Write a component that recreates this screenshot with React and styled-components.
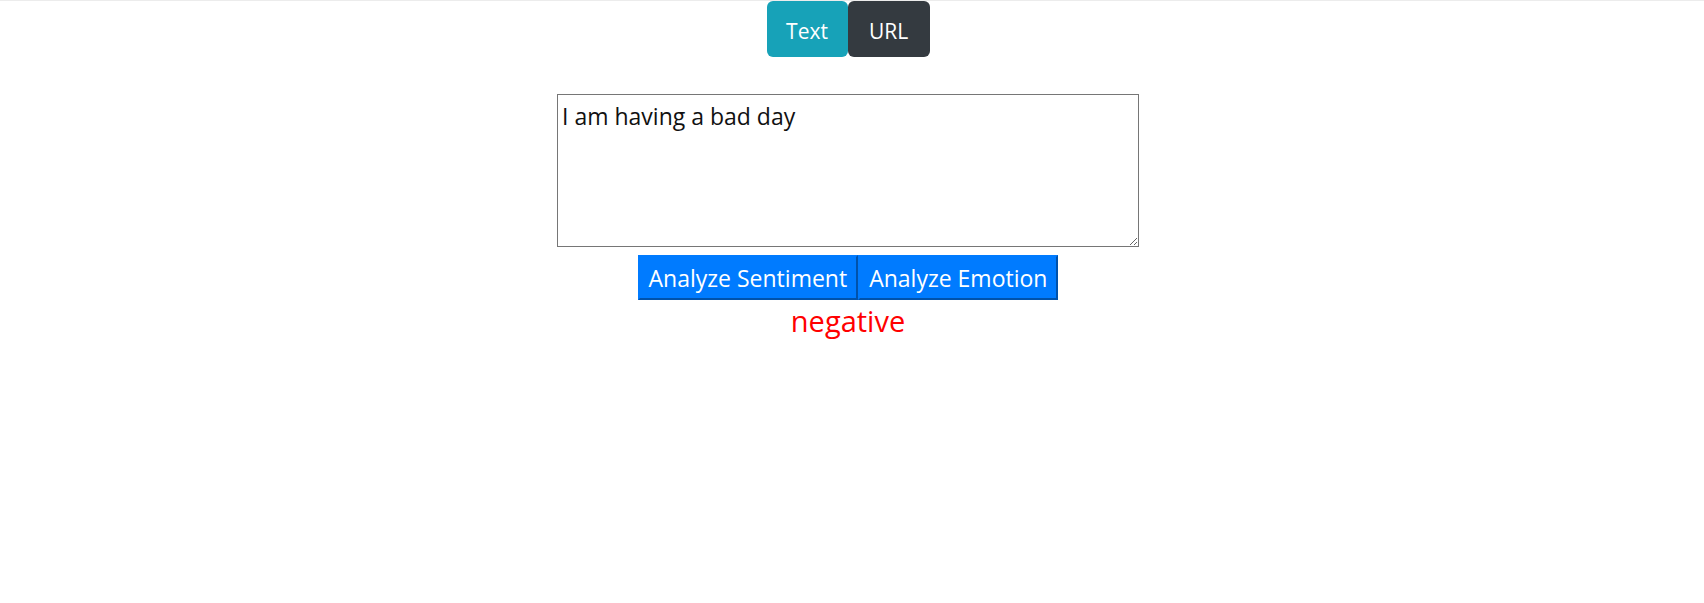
import React, { useState } from "react";
import styled, { createGlobalStyle } from "styled-components";

const Global = createGlobalStyle`
  html, body { margin: 0; padding: 0; background: #fff; }
  body { font-family: "Open Sans", "Noto Sans", sans-serif; color: #212529; }
`;

const Page = styled.div`
  border-top: 1px solid #ececec;
  padding-right: 8px;
  display: flex;
  flex-direction: column;
  align-items: center;
`;

const Tabs = styled.div`
  display: flex;
`;

const Tab = styled.button`
  font-family: inherit;
  font-size: 21px;
  color: #fff;
  background: ${(p) => p.$bg};
  border: none;
  border-radius: 6px;
  height: 56px;
  width: ${(p) => p.$w}px;
  padding: 4px 0 0;
  cursor: pointer;
`;

const TextArea = styled.textarea`
  margin-top: 37px;
  width: 582px;
  height: 153px;
  box-sizing: border-box;
  border: 1px solid #767676;
  font-family: inherit;
  font-size: 23px;
  line-height: 1.5;
  padding: 4px 4px;
  color: #111;
  resize: both;
`;

const ButtonRow = styled.div`
  display: flex;
  margin-top: 8px;
`;

const ActionButton = styled.button`
  font-family: inherit;
  font-size: 23px;
  color: #fff;
  background: #007bff;
  border: 2px outset #007bff;
  height: 45px;
  padding: 0 9px;
  cursor: pointer;
`;

const Result = styled.div`
  color: #ff0000;
  font-size: 29px;
  line-height: normal;
  margin-top: 1px;
`;

export default function App() {
  const [text, setText] = useState("I am having a bad day");
  return (
    <>
      <Global />
      <Page>
        <Tabs>
          <Tab $bg="#17a2b8" $w={81}>Text</Tab>
          <Tab $bg="#343a40" $w={82}>URL</Tab>
        </Tabs>
        <TextArea value={text} onChange={(e) => setText(e.target.value)} />
        <ButtonRow>
          <ActionButton>Analyze Sentiment</ActionButton>
          <ActionButton>Analyze Emotion</ActionButton>
        </ButtonRow>
        <Result>negative</Result>
      </Page>
    </>
  );
}
